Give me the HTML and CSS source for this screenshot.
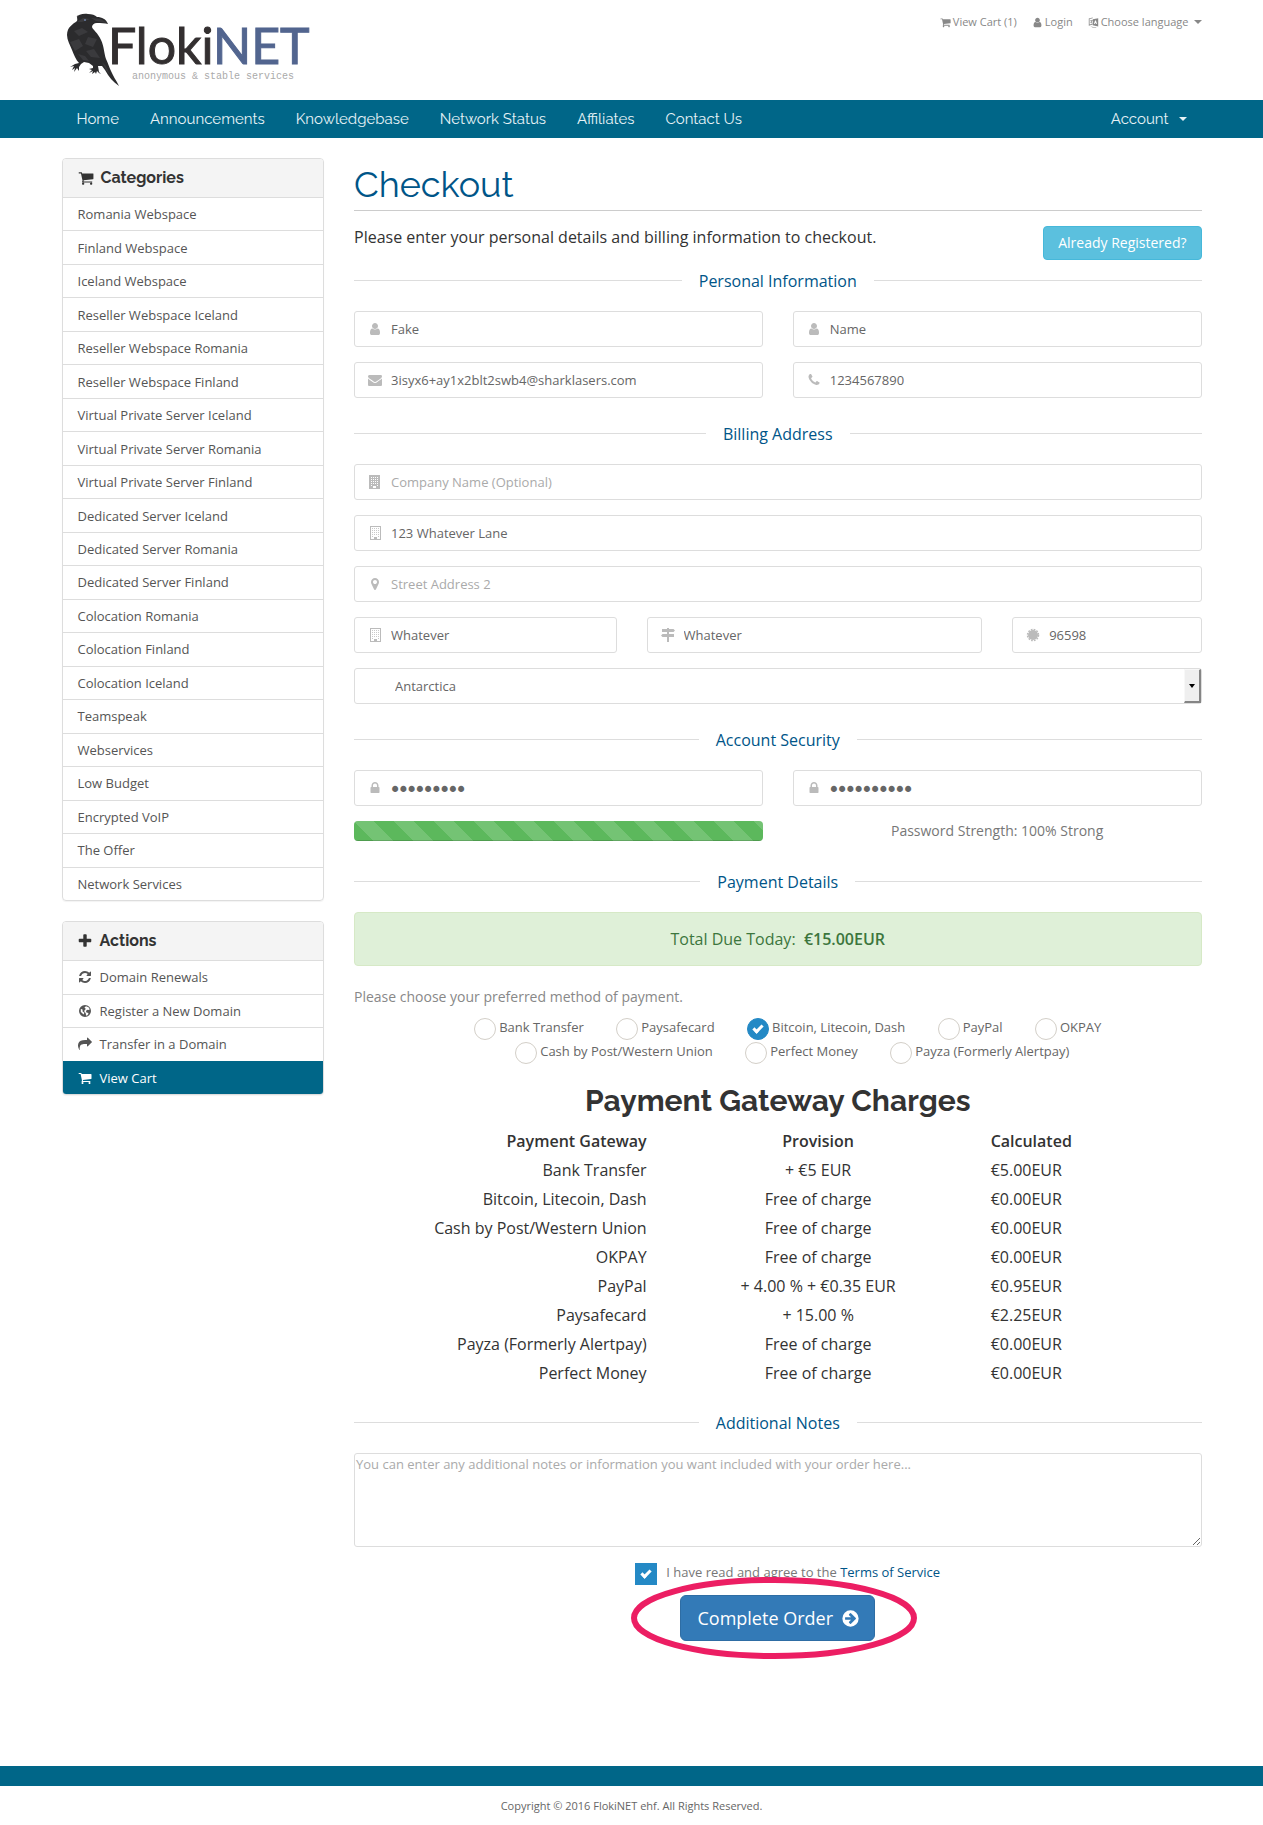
FILE: index.html
```html
<!DOCTYPE html>
<html lang="en">
<head>
<meta charset="utf-8">
<meta name="viewport" content="width=device-width, initial-scale=1">
<title>Checkout - FlokiNET</title>
<link rel="stylesheet" href="styles.css">
</head>
<body>
<svg class="sprite" aria-hidden="true">
  <symbol id="cart" viewBox="0 0 1792 1792"><path d="M704 1536q0 52-38 90t-90 38-90-38-38-90 38-90 90-38 90 38 38 90zm896 0q0 52-38 90t-90 38-90-38-38-90 38-90 90-38 90 38 38 90zm128-1088v512q0 24-16.500 42.500t-40.500 21.500l-1044 122q13 60 13 70 0 16-24 64h920q26 0 45 19t19 45-19 45-45 19h-1024q-26 0-45-19t-19-45q0-11 8-31.500t16-36 21.500-40 15.500-29.500l-177-823h-204q-26 0-45-19t-19-45 19-45 45-19h256q16 0 28.500 6.500t19.500 15.500 13 24.500 8 26 5.500 29.500 4.500 26h1201q26 0 45 19t19 45z"/></symbol>
  <symbol id="user" viewBox="0 0 1792 1792"><path d="M1536 1399q0 109-62.500 187t-150.500 78h-854q-88 0-150.500-78t-62.500-187q0-85 8.500-160.500t31.500-152 58.500-131 94-89 134.500-34.500q131 128 313 128t313-128q76 0 134.500 34.500t94 89 58.500 131 31.500 152 8.500 160.500zm-256-887q0 159-112.500 271.500t-271.500 112.500-271.500-112.500-112.500-271.500 112.500-271.500 271.500-112.500 271.500 112.500 112.500 271.500z"/></symbol>
  <symbol id="mail" viewBox="0 0 1792 1792"><path d="M1792 710v794q0 66-47 113t-113 47h-1472q-66 0-113-47t-47-113v-794q44 49 101 87 362 246 497 345 57 42 92.500 65.500t94.500 48 110 24.500h2q51 0 110-24.500t94.500-48 92.500-65.500q170-123 498-345 57-39 100-87zm0-294q0 79-49 151t-122 123q-376 261-468 325-10 7-42.500 31t-54 38.500-52 32.500-57.500 27-50 9h-2q-23 0-50-9t-57.500-27-52-32.500-54-38.500-42.500-31q-91-64-262-182.500t-205-142.500q-62-42-117-115.500t-55-136.500q0-78 41.500-130t118.500-52h1472q65 0 112.500 47t47.500 113z"/></symbol>
  <symbol id="phone" viewBox="0 0 1792 1792"><path d="M1600 1240q0 27-10 70.500t-21 68.500q-21 50-122 106-94 51-186 51-27 0-53-3.500t-57.500-12.500-47-14.500-55.500-20.500-49-18q-98-35-175-83-127-79-264-216t-216-264q-48-77-83-175-3-9-18-49t-20.500-55.500-14.500-47-12.500-57.500-3.500-53q0-92 51-186 56-101 106-122 25-11 68.500-21t70.500-10q14 0 21 3 18 6 53 76 11 19 30 54t35 63.500 31 53.500q3 4 17.500 25t21.500 35.500 7 28.500q0 20-28.500 50t-62 55-62 53-28.500 46q0 9 5 22.500t8.500 20.500 14 24 11.500 19q76 137 174 235t235 174q2 1 19 11.500t24 14 20.500 8.500 22.500 5q18 0 46-28.500t53-62 55-62 50-28.500q14 0 28.500 7t35.500 21.500 25 17.500q25 15 53.500 31t63.500 35 54 30q70 35 76 53 3 7 3 21z"/></symbol>
  <symbol id="marker" viewBox="0 0 1792 1792"><path d="M1152 640q0-106-75-181t-181-75-181 75-75 181 75 181 181 75 181-75 75-181zm256 0q0 109-33 179l-364 774q-16 33-47.500 52t-67.500 19-67.500-19-46.500-52l-365-774q-33-70-33-179 0-212 150-362t362-150 362 150 150 362z"/></symbol>
  <symbol id="lock" viewBox="0 0 1792 1792"><path d="M640 768h512v-192q0-106-75-181t-181-75-181 75-75 181v192zm832 96v576q0 40-28 68t-68 28h-960q-40 0-68-28t-28-68v-576q0-40 28-68t68-28h32v-192q0-184 132-316t316-132 316 132 132 316v192h32q40 0 68 28t28 68z"/></symbol>
  <symbol id="refresh" viewBox="0 0 1792 1792"><path d="M1639 1056q0 5-1 7-64 268-268 434.500t-478 166.500q-146 0-282.500-55t-243.500-157l-129 129q-19 19-45 19t-45-19-19-45v-448q0-26 19-45t45-19h448q26 0 45 19t19 45-19 45l-137 137q71 66 161 102t187 36q134 0 250-65t186-179q11-17 53-117 8-23 30-23h192q13 0 22.500 9.500t9.500 22.500zm25-800v448q0 26-19 45t-45 19h-448q-26 0-45-19t-19-45 19-45l138-138q-148-137-349-137-134 0-250 65t-186 179q-11 17-53 117-8 23-30 23h-199q-13 0-22.500-9.500t-9.500-22.500v-7q65-268 270-434.500t480-166.500q146 0 284 55.500t245 156.500l130-129q19-19 45-19t45 19 19 45z"/></symbol>
  <symbol id="plus" viewBox="0 0 1792 1792"><path d="M1600 736v192q0 40-28 68t-68 28h-416v416q0 40-28 68t-68 28h-192q-40 0-68-28t-28-68v-416h-416q-40 0-68-28t-28-68v-192q0-40 28-68t68-28h416v-416q0-40 28-68t68-28h192q40 0 68 28t28 68v416h416q40 0 68 28t28 68z"/></symbol>
  <symbol id="share" viewBox="0 0 1792 1792"><path d="M1792 640q0 26-19 45l-512 512q-19 19-45 19t-45-19-19-45v-256h-224q-98 0-175.500 6t-154 21.500-133 42.500-105.500 69.500-80 101-48.500 138.500-17.500 181q0 55 5 123 0 6 2.500 23.500t2.500 26.500q0 15-8.500 25t-23.500 10q-16 0-28-17-7-9-13-22t-13.500-30-10.500-24q-127-285-127-451 0-199 53-333 162-403 875-403h224v-256q0-26 19-45t45-19 45 19l512 512q19 19 19 45z"/></symbol>
  <symbol id="arrow" viewBox="0 0 1792 1792"><path fill-rule="evenodd" d="M896 128a768 768 0 1 0 0 1536 768 768 0 0 0 0-1536zM942 398l453 453q18 18 18 45t-18 45l-453 453q-18 18-45 18t-45-18l-91-91q-19-19-19-45t19-45l189-189H448q-26 0-45-19t-19-45V832q0-26 19-45t45-19h502L761 579q-18-18-18-45t18-45l91-91q18-18 45-18t45 18z"/></symbol>
  <symbol id="globe" viewBox="0 0 14 14"><path fill-rule="evenodd" d="M7 1a6 6 0 1 0 0 12A6 6 0 0 0 7 1zM8 2.200l2.500 1 1.300 2-1 .8-1.300-.3-1.200.8L8 8l1 .8h1.200l.2 1.200-1.700 1.900-.9-1.600-.1-1.400-1.300-1 .1-1.700 1.300-1.100L7 4l-.6-.6zM2.800 5l1.400.2.600 1L4.300 7l1 1 .9.500-.2 1.300-.9.700-.7-1.300L2.800 8z"/></symbol>
  <symbol id="building" viewBox="0 0 14 14"><path fill-rule="evenodd" d="M1 0h11v14H1zM3 2v1h1V2zm2 0v1h1V2zm2 0v1h1V2zm2 0v1h1V2zM3 4v1h1V4zm2 0v1h1V4zm2 0v1h1V4zm2 0v1h1V4zM3 6v1h1V6zm2 0v1h1V6zm2 0v1h1V6zm2 0v1h1V6zM3 8v1h1V8zm2 0v1h1V8zm2 0v1h1V8zm2 0v1h1V8zM3 10v1h1v-1zm6 0v1h1v-1zM5 11v2h3v-2z"/></symbol>
  <symbol id="building-o" viewBox="0 0 14 14"><path fill-rule="evenodd" d="M2 0h11v14H2zM3 1v12h3v-2h3v2h3V1z"/><path d="M4 2h1v1H4zm2 0h1v1H6zm2 0h1v1H8zm2 0h1v1h-1zM4 4h1v1H4zm2 0h1v1H6zm2 0h1v1H8zm2 0h1v1h-1zM4 6h1v1H4zm2 0h1v1H6zm2 0h1v1H8zm2 0h1v1h-1zM4 8h1v1H4zm2 0h1v1H6zm2 0h1v1H8zm2 0h1v1h-1zM4 10h1v1H4zm6 0h1v1h-1z" opacity=".8"/></symbol>
  <symbol id="signs" viewBox="0 0 14 14"><path d="M6 0h2v1h4.500L14 2.500 12.500 4H1V1h5zM6 4h2v2h5v3H1.500L0 7.500 1.500 6H6zM6 9h2v5H6z"/></symbol>
  <symbol id="cert" viewBox="0 0 14 14"><circle cx="7" cy="7" r="5"/><circle cx="7" cy="7" r="5.500" fill="none" stroke="currentColor" stroke-width="1.500" stroke-dasharray="1.730 1.150"/></symbol>
  <symbol id="lang" viewBox="0 0 14 14"><path fill-rule="evenodd" d="M6 3l7-1.500V12L6 10.500zM9 4.500L7.500 9h1l.4-1.200h1.300l.4 1.200h1L10 4.500z"/><path d="M1 2l5-1.500v1L2 2.700v7L6 8.500v1L1 11zM3 4h3v1H5L4.500 7 6 8H4L3 7l1-2H3zM3 12l3 1.500h5l-1-.8H7z"/></symbol>
</svg>

<header class="container top">
  <a class="logo" href="#" aria-label="FlokiNET home">
    <svg width="250" height="76" viewBox="62 12 250 76" role="img" aria-label="FlokiNET, anonymous &amp; stable services">
      <path fill="#2b2b2d" d="M76 17c2-2 7-4 12-3 4 0 7 1 9 3 5 0 9 2 11 7-3-1-7-1-11-1-3 0-5 2-5 4 1 3 6 6 9 13 3 6 3 13 5 19 2 4 3 8 5 12 2 5 5 9 8 15-6-4-10-9-14-16l-3-4h-4l1 6 2 2-2-1-2-2-1 3-1-2-3 2 1-3-4 2 3-3-3-1 4-1v-2l-4-3-5-1-3 2-2 3 0 4-2-3-3 4 1-4-3 2 2-4-4 1 5-3 4-1c-3-3-5-8-7-13-2-5-5-10-5-15 0-8 6-11 10-14 1-2-1-4 1-6z"/>
      <path fill="#3a3a3d" d="M77 22l6-4 7 1-8 3zM91 18l10 1 6 4-11-2zM74 31l8-3 6 4-9 4zM70 42l9-3 4 7-8 5zM88 37l9 2-4 8-8-3zM86 51l8-2 6 9-9-1zM78 54l7 2 4 5-6-1zM102 62l4 8 4 5-4-9z"/>
      <circle cx="85" cy="20" r="1" fill="#6b7fa5"/>
      <text class="logo-name" x="108" y="64">Floki<tspan class="logo-net">NET</tspan></text>
      <text class="logo-tag" x="132" y="79">anonymous &amp; stable services</text>
    </svg>
  </a>
  <ul class="top-links">
    <li><a href="#"><svg class="icon-s"><use href="#cart"/></svg>View Cart (1)</a></li>
    <li><a href="#"><svg class="icon-s"><use href="#user"/></svg>Login</a></li>
    <li><a href="#"><svg class="icon-s"><use href="#lang"/></svg>Choose language<span class="caret"></span></a></li>
  </ul>
</header>

<nav class="navbar">
  <div class="container nav-inner">
    <a href="#">Home</a>
    <a href="#">Announcements</a>
    <a href="#">Knowledgebase</a>
    <a href="#">Network Status</a>
    <a href="#">Affiliates</a>
    <a href="#">Contact Us</a>
    <a class="account" href="#">Account<span class="caret"></span></a>
  </div>
</nav>

<div class="container layout">
  <aside class="sidebar">
    <section class="panel">
      <h3 class="panel-title"><svg class="icon-l"><use href="#cart"/></svg>Categories</h3>
      <div class="list list-categories">
        <a href="#">Romania Webspace</a>
        <a href="#">Finland Webspace</a>
        <a href="#">Iceland Webspace</a>
        <a href="#">Reseller Webspace Iceland</a>
        <a href="#">Reseller Webspace Romania</a>
        <a href="#">Reseller Webspace Finland</a>
        <a href="#">Virtual Private Server Iceland</a>
        <a href="#">Virtual Private Server Romania</a>
        <a href="#">Virtual Private Server Finland</a>
        <a href="#">Dedicated Server Iceland</a>
        <a href="#">Dedicated Server Romania</a>
        <a href="#">Dedicated Server Finland</a>
        <a href="#">Colocation Romania</a>
        <a href="#">Colocation Finland</a>
        <a href="#">Colocation Iceland</a>
        <a href="#">Teamspeak</a>
        <a href="#">Webservices</a>
        <a href="#">Low Budget</a>
        <a href="#">Encrypted VoIP</a>
        <a href="#">The Offer</a>
        <a href="#">Network Services</a>
      </div>
    </section>
    <section class="panel">
      <h3 class="panel-title"><svg class="icon-l plus"><use href="#plus"/></svg>Actions</h3>
      <div class="list list-actions">
        <a href="#"><svg class="icon"><use href="#refresh"/></svg>Domain Renewals</a>
        <a href="#"><svg class="icon"><use href="#globe"/></svg>Register a New Domain</a>
        <a href="#"><svg class="icon"><use href="#share"/></svg>Transfer in a Domain</a>
        <a class="active" href="#"><svg class="icon"><use href="#cart"/></svg>View Cart</a>
      </div>
    </section>
  </aside>

  <main class="main">
    <h1>Checkout</h1>
    <form>
      <div class="intro">
        <p>Please enter your personal details and billing information to checkout.</p>
        <button class="btn-info" type="button">Already Registered?</button>
      </div>

      <h2 class="section-title first">Personal Information</h2>
      <div class="fields">
        <label class="field half"><svg class="icon"><use href="#user"/></svg><input type="text" aria-label="First Name" value="Fake"></label>
        <label class="field half"><svg class="icon"><use href="#user"/></svg><input type="text" aria-label="Last Name" value="Name"></label>
        <label class="field half"><svg class="icon"><use href="#mail"/></svg><input type="email" aria-label="Email Address" value="3isyx6+ay1x2blt2swb4@sharklasers.com"></label>
        <label class="field half"><svg class="icon"><use href="#phone"/></svg><input type="tel" aria-label="Phone Number" value="1234567890"></label>
      </div>

      <h2 class="section-title">Billing Address</h2>
      <div class="fields">
        <label class="field full"><svg class="icon"><use href="#building"/></svg><input type="text" aria-label="Company Name" placeholder="Company Name (Optional)"></label>
        <label class="field full"><svg class="icon"><use href="#building-o"/></svg><input type="text" aria-label="Street Address" value="123 Whatever Lane"></label>
        <label class="field full"><svg class="icon"><use href="#marker"/></svg><input type="text" aria-label="Street Address 2" placeholder="Street Address 2"></label>
        <label class="field city"><svg class="icon"><use href="#building-o"/></svg><input type="text" aria-label="City" value="Whatever"></label>
        <label class="field state"><svg class="icon"><use href="#signs"/></svg><input type="text" aria-label="State" value="Whatever"></label>
        <label class="field zip"><svg class="icon"><use href="#cert"/></svg><input type="text" aria-label="Postcode" value="96598"></label>
        <label class="field full select"><select aria-label="Country"><option>Antarctica</option></select><span class="select-arrow"></span></label>
      </div>

      <h2 class="section-title">Account Security</h2>
      <div class="fields">
        <label class="field half"><svg class="icon"><use href="#lock"/></svg><input type="password" aria-label="Password" value="whatever1"></label>
        <label class="field half"><svg class="icon"><use href="#lock"/></svg><input type="password" aria-label="Confirm Password" value="whatever12"></label>
        <div class="half progress" role="progressbar" aria-label="Password strength" aria-valuenow="100"><div class="progress-fill" style="width:100%"></div></div>
        <p class="half strength">Password Strength: 100% Strong</p>
      </div>

      <h2 class="section-title after-progress">Payment Details</h2>
      <div class="total">Total Due Today: &nbsp;<strong>€15.00EUR</strong></div>
      <p class="choose">Please choose your preferred method of payment.</p>
      <div class="methods">
        <label><input type="radio" name="method">Bank Transfer</label>
        <label><input type="radio" name="method">Paysafecard</label>
        <label><input type="radio" name="method" checked>Bitcoin, Litecoin, Dash</label>
        <label><input type="radio" name="method">PayPal</label>
        <label><input type="radio" name="method">OKPAY</label>
        <label><input type="radio" name="method">Cash by Post/Western Union</label>
        <label><input type="radio" name="method">Perfect Money</label>
        <label><input type="radio" name="method">Payza (Formerly Alertpay)</label>
      </div>

      <h2 class="charges-title">Payment Gateway Charges</h2>
      <table class="charges">
        <thead><tr><th>Payment Gateway</th><th>Provision</th><th>Calculated</th></tr></thead>
        <tbody>
          <tr><td>Bank Transfer</td><td>+ €5 EUR</td><td>€5.00EUR</td></tr>
          <tr><td>Bitcoin, Litecoin, Dash</td><td>Free of charge</td><td>€0.00EUR</td></tr>
          <tr><td>Cash by Post/Western Union</td><td>Free of charge</td><td>€0.00EUR</td></tr>
          <tr><td>OKPAY</td><td>Free of charge</td><td>€0.00EUR</td></tr>
          <tr><td>PayPal</td><td>+ 4.00 % + €0.35 EUR</td><td>€0.95EUR</td></tr>
          <tr><td>Paysafecard</td><td>+ 15.00 %</td><td>€2.25EUR</td></tr>
          <tr><td>Payza (Formerly Alertpay)</td><td>Free of charge</td><td>€0.00EUR</td></tr>
          <tr><td>Perfect Money</td><td>Free of charge</td><td>€0.00EUR</td></tr>
        </tbody>
      </table>

      <h2 class="section-title">Additional Notes</h2>
      <textarea class="notes" rows="4" aria-label="Additional Notes" placeholder="You can enter any additional notes or information you want included with your order here..."></textarea>

      <div class="terms"><input id="tos" type="checkbox" checked><label for="tos">I have read and agree to the <a href="#">Terms of Service</a></label></div>
      <div class="submit">
        <button class="btn-primary" type="submit">Complete Order<svg class="icon-xl"><use href="#arrow"/></svg></button>
        <svg class="highlight" viewBox="0 0 286 82" aria-hidden="true"><ellipse cx="143" cy="41" rx="140" ry="38"/></svg>
      </div>
    </form>
  </main>
</div>

<footer class="footer">Copyright © 2016 FlokiNET ehf. All Rights Reserved.</footer>
</body>
</html>
```

FILE: styles.css
```css
*, ::before, ::after { box-sizing: border-box; }
body {
  margin: 0;
  background: #fff;
  color: #333;
  font: 16px/22px "Open Sans", "Noto Sans", sans-serif;
}
a { color: #058; text-decoration: none; }
h1, h2, h3, p, ul { margin: 0; padding: 0; }
input, select, textarea, button { font-family: inherit; margin: 0; }
svg { fill: currentColor; flex: none; }
.sprite { display: none; }
.icon-s { width: 11px; height: 11px; }
.icon { width: 14px; height: 14px; }
.icon-l { width: 16px; height: 16px; }
.icon-xl { width: 19px; height: 19px; }
.container { max-width: 1170px; margin: 0 auto; padding: 0 15px; }

.caret {
  display: inline-block;
  border: 4px solid transparent;
  border-top-color: currentColor;
  border-bottom: 0;
}

/* header */
.top { display: flex; justify-content: space-between; align-items: flex-start; min-height: 100px; padding-top: 12px; }
.logo svg { display: block; }
.logo-name { font: 50px Lato, "Open Sans", sans-serif; fill: #332f30; stroke: #332f30; }
.logo-net { fill: #52658f; stroke: #52658f; }
.logo-tag { font: 10px "Liberation Mono", monospace; fill: #aaa; }
.top-links { display: flex; gap: 15px; list-style: none; font-size: 11px; line-height: 20px; }
.top-links a { display: flex; align-items: center; gap: 2px; color: #888; }
.top-links .caret { margin-left: 3px; }

.navbar { background: #068; }
.nav-inner { display: flex; gap: 1px; }
.nav-inner a { padding: 0 15px; color: #e6f2f6; font: 15px/38px Raleway, Lato, sans-serif; }
.nav-inner .account { display: flex; align-items: center; gap: 10px; margin-left: auto; }

.layout { display: grid; grid-template-columns: repeat(12, minmax(0, 1fr)); column-gap: 30px; padding-top: 20px; align-items: start; }
.sidebar { grid-column: span 3; display: grid; gap: 20px; }
.main { grid-column: span 9; }

/* sidebar */
.panel { border: 1px solid #ddd; border-radius: 4px; overflow: hidden; box-shadow: 0 1px 1px rgba(0, 0, 0, .05); }
.panel-title {
  display: flex; align-items: center; gap: 7px;
  padding: 0 15px;
  background: #f4f4f4;
  font: 700 16px/38px Raleway, Lato, sans-serif;
}
.plus { margin-left: -1px; }
.list { display: grid; grid-auto-rows: 1fr; }
.list-categories { min-height: 703px; }
.list-actions { min-height: 134px; }
.list a { display: flex; align-items: center; gap: 8px; padding: 0 15px; border-top: 1px solid #ddd; color: #555; font-size: 13px; line-height: 18px; }
.list .active { background: #068; border-color: #068; color: #fff; }

/* checkout */
h1 { border-bottom: 1px solid #ccc; color: #058; font: 36px/52px Raleway, Lato, sans-serif; }
.intro { display: flex; justify-content: space-between; align-items: flex-start; padding-top: 15px; }
.btn-info { height: 34px; padding: 0 14px 2px; border: 1px solid #46b8da; border-radius: 4px; background: #5bc0de; color: #fff; font-size: 14px; }
.section-title {
  display: flex; align-items: center; gap: 17px;
  margin: 25px 0 18px;
  color: #058;
  font-size: 16px; font-weight: 400; line-height: 23px;
}
.section-title::before, .section-title::after { content: ""; flex: 1; height: 1px; margin-bottom: 2px; background: #ddd; }
.section-title.first { margin-top: 10px; }
.section-title.after-progress { margin-top: 30px; }

.fields { display: grid; grid-template-columns: repeat(12, minmax(0, 1fr)); gap: 15px 30px; }
.full { grid-column: span 12; }
.half { grid-column: span 6; }
.city { grid-column: span 4; }
.state { grid-column: span 5; }
.zip { grid-column: span 3; }
.field { display: flex; align-items: center; gap: 9px; height: 36px; padding-left: 13px; border: 1px solid #ddd; border-radius: 3px; color: #bbb; }
.field input, .field select { flex: 1; min-width: 0; height: 34px; padding: 0; border: 0; background: none; color: #666; font-size: 13px; }
.field input[type="password"] { padding-top: 2px; font-family: "DejaVu Sans", sans-serif; font-size: 14px; -webkit-text-stroke: 2px #666; }
::placeholder { color: #aaa; opacity: 1; }
.select { position: relative; padding-left: 0; }
.field select { appearance: none; padding-left: 40px; }
.select-arrow {
  position: absolute; top: 0; right: 0; bottom: 0;
  display: grid; place-items: center;
  width: 17px;
  border-style: solid; border-width: 1px 2px 2px 1px; border-color: #f8f8f8 #858585 #858585 #f8f8f8;
  background: #efefef; color: #000;
  pointer-events: none;
}
.select-arrow::before { content: ""; border: 3px solid transparent; border-top: 4px solid; border-bottom: 0; }

.progress { height: 20px; border-radius: 4px; overflow: hidden; background: #f5f5f5; }
.progress-fill {
  height: 100%;
  background: linear-gradient(45deg, rgba(255,255,255,.15) 25%, transparent 25%, transparent 50%, rgba(255,255,255,.15) 50%, rgba(255,255,255,.15) 75%, transparent 75%) 0 0 / 40px 40px #5cb85c;
  box-shadow: inset 0 -1px 0 rgba(0, 0, 0, .15);
}
.strength { color: #777; font-size: 14px; line-height: 20px; text-align: center; }

.total { padding: 15px; border: 1px solid #d6e9c6; border-radius: 4px; background: #dff0d8; color: #3c763d; text-align: center; }
.total strong, th { font-weight: 600; }
.choose { margin: 21px 0 11px; color: #888; font-size: 14px; line-height: 20px; }

.methods { color: #666; font-size: 13px; line-height: 24px; text-align: center; }
.methods label { display: inline-flex; align-items: flex-start; gap: 3px; height: 24px; padding-left: 20px; vertical-align: top; line-height: 19px; }
.methods label + label { margin-left: 9px; }
input[type="radio"], input[type="checkbox"] {
  appearance: none;
  display: grid; place-items: center;
  flex: none;
  width: 22px; height: 22px;
  border: 1px solid #d3cfc8;
}
input[type="radio"] { border-radius: 50%; }
input:checked { border-color: #2489c5; background: #2489c5; }
input:checked::before {
  content: "";
  width: 10px; height: 6px;
  margin-bottom: 3px;
  border: solid #fff; border-width: 0 0 3px 3px;
  transform: rotate(-45deg);
}

.charges-title { margin: 18px 0 9px; font: 700 30px/33px Raleway, Lato, sans-serif; text-align: center; }
.charges { width: 100%; border-collapse: collapse; table-layout: fixed; }
.charges th, .charges td { height: 29px; padding: 0; text-align: center; }
.charges tr :first-child { width: 35%; padding-right: 4px; text-align: right; }
.charges tr :nth-child(2) { width: 40%; padding-right: 4px; }
.charges tr :last-child { padding-left: 1px; text-align: left; }

.notes { display: block; width: 100%; height: 94px; padding: 1px; border: 1px solid #ddd; border-radius: 3px; color: #666; font-size: 13px; line-height: 18px; }
.terms { display: flex; justify-content: center; gap: 9px; margin: 16px 0 10px; padding-left: 20px; color: #777; font-size: 13px; line-height: 18px; }
.submit { position: relative; display: flex; justify-content: center; margin-bottom: 125px; }
.btn-primary { display: flex; align-items: center; gap: 8px; height: 46px; padding: 0 14px 0 16px; border: 1px solid #2e6da4; border-radius: 6px; background: #337ab7; color: #fff; font-size: 18px; }
.highlight { position: absolute; top: -18px; left: 50%; width: 286px; height: 82px; margin-left: -147px; pointer-events: none; }
.highlight ellipse { fill: none; stroke: #ec1e63; stroke-width: 6; }

.footer { padding: 9px 0 8px; border-top: 20px solid #068; color: #666; font-size: 11px; text-align: center; }
```
